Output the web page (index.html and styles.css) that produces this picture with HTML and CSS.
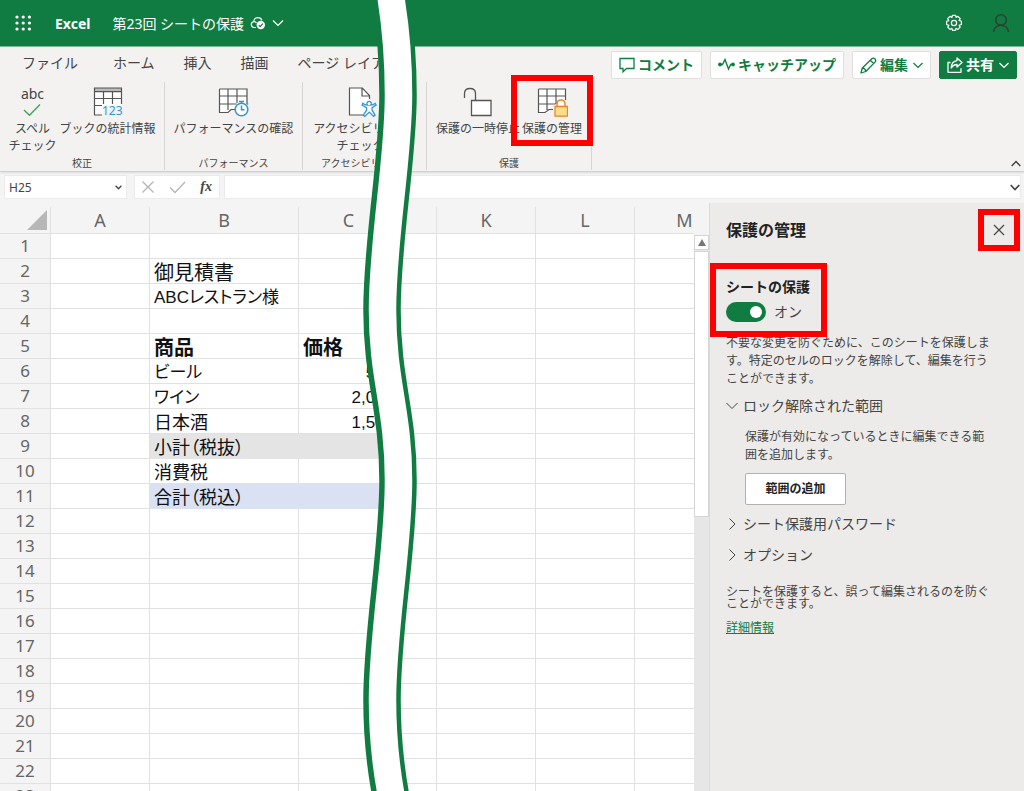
FILE: index.html
```html
<!DOCTYPE html>
<html lang="ja">
<head>
<meta charset="utf-8">
<meta name="viewport" content="width=device-width, initial-scale=1">
<title>第23回 シートの保護 - Excel</title>
<link rel="stylesheet" href="styles.css">
</head>
<body>
<div class="app">
  <header class="titlebar">
    <button class="plain launcher" aria-label="アプリ起動ツール">
      <svg width="18" height="18" viewBox="0 0 18 18" fill="#fff"><circle cx="3" cy="3" r="1.6"/><circle cx="9.200" cy="3" r="1.6"/><circle cx="15.400" cy="3" r="1.6"/><circle cx="3" cy="9" r="1.6"/><circle cx="9.200" cy="9" r="1.6"/><circle cx="15.400" cy="9" r="1.6"/><circle cx="3" cy="15" r="1.6"/><circle cx="9.200" cy="15" r="1.6"/><circle cx="15.400" cy="15" r="1.6"/></svg>
    </button>
    <span class="brand">Excel</span>
    <button class="plain doc-name">第23回 シートの保護
      <svg width="16" height="14" viewBox="0 0 16 14" fill="none" stroke="#fff" stroke-width="1.200"><path d="M6 11.500H4A3 3 0 0 1 3.600 5.600C4 3 5.600 1.600 8 1.600c2 0 3.300 1 3.900 2.600"/><path d="M3.600 5.600c1.500-.2 2.400.4 2.900 1.400"/><circle cx="10.800" cy="9" r="4.200" fill="#fff" stroke="none"/><path d="M8.800 9.200l1.400 1.400 2.700-2.900" stroke="#107c41"/></svg>
      <svg width="12" height="8" viewBox="0 0 12 8" fill="none" stroke="#fff" stroke-width="1.200"><path d="M1 1.500l5 5 5-5"/></svg>
    </button>
    <div class="account">
      <button class="plain" aria-label="設定">
        <svg width="18" height="18" viewBox="0 0 18 18" fill="none" stroke="#fff" stroke-width="1.200" stroke-linejoin="round"><path d="M7.400 1.400h3.200l.5 2 1.800-1.100 2.300 2.300-1.100 1.800 2.300.8v3.300l-2.300.7 1.100 1.900-2.300 2.300-1.900-1.100-.6 2.100H7.500l-.6-2.100L5 15.400l-2.300-2.300 1.200-1.900-2.300-.7V7.300l2.200-.7-1.100-2 2.300-2.300 1.900 1.200z"/><circle cx="9" cy="9" r="2.600"/></svg>
      </button>
      <button class="plain" aria-label="アカウント">
        <svg width="18" height="20" viewBox="0 0 18 20" fill="none" stroke="#303f35" stroke-width="1.500"><circle cx="9" cy="7" r="5.300"/><path d="M1.500 19c.5-4 3.500-6.700 7.500-6.700s7 2.700 7.500 6.700"/></svg>
      </button>
    </div>
  </header>

  <div class="ribbon">
    <div class="tab-row">
      <nav class="tabs">
        <button class="plain tab tab-file">ファイル</button>
        <button class="plain tab">ホーム</button>
        <button class="plain tab">挿入</button>
        <button class="plain tab">描画</button>
        <button class="plain tab">ページ レイアウト</button>
      </nav>
      <div class="actions">
        <button class="action"><svg width="16" height="16" viewBox="0 0 16 16" fill="none" stroke="currentColor" stroke-width="1.300"><path d="M1 1.500h14v10H7.500L4 14.800v-3.300H1z"/></svg>コメント</button>
        <button class="action"><svg width="17" height="16" viewBox="0 0 17 16" fill="none" stroke="currentColor" stroke-width="1.400"><path d="M2 7.500h2.500L7 2.500l3.500 9.500 2.200-4.500H15"/><circle cx="2" cy="7.500" r="1.200" fill="currentColor"/><circle cx="15" cy="7.500" r="1.200" fill="currentColor"/></svg>キャッチアップ</button>
        <button class="action"><svg width="17" height="17" viewBox="0 0 17 17" fill="none" stroke="currentColor" stroke-width="1.300" stroke-linejoin="round"><path d="M1 16l1.300-5L11.800 1.700c2-1.600 4.900.8 3.400 3.200L5.800 14.500zM2.300 11c1.900.2 3.300 1.600 3.500 3.500M10.300 3.200l3.400 3.400"/></svg>編集<svg class="caret" width="10" height="7" viewBox="0 0 10 7" fill="none" stroke="currentColor" stroke-width="1.200"><path d="M.5 1L5 5.500 9.500 1"/></svg></button>
        <button class="action action-share"><svg width="16" height="16" viewBox="0 0 16 16" fill="none" stroke="currentColor" stroke-width="1.300" stroke-linejoin="round"><path d="M3.500 5.500H1v9.800h13v-4"/><path d="M10 1l5 4.500-5 4.500V7.500C7.500 7.400 5.800 8.500 4.200 11 4.400 6.800 6.500 4 10 3.600z"/></svg>共有<svg class="caret" width="10" height="7" viewBox="0 0 10 7" fill="none" stroke="currentColor" stroke-width="1.200"><path d="M.5 1L5 5.500 9.500 1"/></svg></button>
      </div>
    </div>

    <div class="commands">
      <section class="group group-proof">
        <div class="group-buttons">
          <button class="plain command">
            <span class="spell"><span>abc</span><svg width="20" height="14" viewBox="0 0 20 14" fill="none" stroke="#3fa45f" stroke-width="1.400"><path d="M2 7l5.500 5.300L18 1.500"/></svg></span>
            <span>スペル<br>チェック</span>
          </button>
          <button class="plain command">
            <svg width="32" height="32" viewBox="0 0 32 32" fill="none"><path d="M2.500 3.500h27v17H11v9H2.500z" fill="#fff"/><path d="M2 3h28v3.500H2z" fill="#bbb"/><path d="M10 30H2.500V3H29.500v16M2.500 6.700h27M2.500 13.500h27M2.500 20.500H10M11.500 7v12M20.500 7v12" stroke="#555" stroke-width="1.200"/><text x="10" y="30" class="icon-number">123</text></svg>
            <span>ブックの統計情報</span>
          </button>
        </div>
        <span class="group-name">校正</span>
      </section>
      <section class="group group-performance">
        <div class="group-buttons">
          <button class="plain command">
            <svg width="32" height="32" viewBox="0 0 32 32" fill="none"><path d="M2.500 4h27v19l-15 2-3 3h-9z" fill="#fff"/><path d="M2.500 4H30v14M2.500 4v23.500H11l3-3h4M2.500 11H30M2.500 19h17M11 4v21M20 4v14" stroke="#555" stroke-width="1.200"/><circle cx="24.500" cy="24.500" r="6.300" fill="#fff" stroke="#3595d3" stroke-width="1.600"/><path d="M24.500 20.500v4.300h3M22 16.500h5M24.500 16v3M29.500 18l1.500 1.500" stroke="#3595d3" stroke-width="1.500"/></svg>
            <span>パフォーマンスの確認</span>
          </button>
        </div>
        <span class="group-name">パフォーマンス</span>
      </section>
      <section class="group group-access">
        <div class="group-buttons">
          <button class="plain command">
            <svg width="32" height="32" viewBox="0 0 32 32" fill="none"><path d="M4.500 3h13l7 7.500V16l-4 3v11.500h-16z" fill="#fff"/><path d="M20 30H4.500V3h12.800l7.200 7.500V14M17 3v8h8" stroke="#555" stroke-width="1.200"/><path d="M17.800 18.300c1.700 1.600 3.200 1.800 4.800 1.900a2.200 2.200 0 1 1 3 0c1.600-.1 3.100-.3 4.500-1.800l1 1.600-4 2.700v2.500l3 5-1.500 1.200-4.300-4.300-4.500 4.300-1.500-1.200 3.300-5v-2.500l-4.500-2.500z" fill="#fff" stroke="#3595d3" stroke-width="1.300"/></svg>
            <span>アクセシビリティ<br>チェック</span>
          </button>
        </div>
        <span class="group-name">アクセシビリティ</span>
      </section>
      <section class="group group-protect">
        <div class="group-buttons">
          <button class="plain command">
            <svg width="32" height="32" viewBox="0 0 32 32" fill="none" stroke="#555" stroke-width="1.300"><path d="M9.500 15.500h19.500v15H9.500z" fill="#fff"/><path d="M2.500 13V8.500C2.500 5 4.500 3.500 8 3.500S13.500 5 13.500 8.500v7"/></svg>
            <span>保護の一時停止</span>
          </button>
          <button class="plain command marked mark-command">
            <svg width="32" height="32" viewBox="0 0 32 32" fill="none"><path d="M2.500 4h27v16H17l-5 7.500H2.500z" fill="#fff"/><path d="M2.500 4H29.500v11M2.500 4v23.500H9l4-3h4M2.500 11h27M2.500 19h17M11 4v21M20 4v15" stroke="#555" stroke-width="1.200"/><path d="M21 22v-3c0-5.500 8-5.500 8 0v3" stroke="#e8862b" stroke-width="1.500"/><path d="M19 21.500h12.500v9.700H19z" fill="#fadd8b" stroke="#e8862b" stroke-width="1.300"/></svg>
            <span>保護の管理</span>
          </button>
        </div>
        <span class="group-name">保護</span>
      </section>
      <button class="plain collapse" aria-label="リボンを折りたたむ"><svg width="10" height="7" viewBox="0 0 10 7" fill="none" stroke="#444" stroke-width="1.500"><path d="M.7 6L5 1.500 9.300 6"/></svg></button>
    </div>
  </div>

  <div class="formula-bar">
    <div class="name-box">
      <input class="name-input" type="text" value="H25" aria-label="名前ボックス">
      <button class="plain" aria-label="名前の一覧"><svg width="7" height="5" viewBox="0 0 7 5" fill="none" stroke="#444" stroke-width="1.300"><path d="M.6.800l2.900 3 2.900-3"/></svg></button>
    </div>
    <div class="entry-buttons">
      <button class="plain" aria-label="キャンセル"><svg width="14" height="14" viewBox="0 0 14 14" fill="none" stroke="#b5b5b5" stroke-width="1.300"><path d="M1.500 1.500l11 11M12.500 1.500l-11 11"/></svg></button>
      <button class="plain" aria-label="入力"><svg width="17" height="14" viewBox="0 0 17 14" fill="none" stroke="#b5b5b5" stroke-width="1.300"><path d="M1 7.500l5 5L16 2"/></svg></button>
      <button class="plain fx" aria-label="関数の挿入">fx</button>
    </div>
    <div class="formula-box">
      <input class="formula-input" type="text" aria-label="数式バー">
      <button class="plain" aria-label="数式バーの展開"><svg width="10" height="7" viewBox="0 0 10 7" fill="none" stroke="#444" stroke-width="1.700"><path d="M.7 1L5 5.500 9.300 1"/></svg></button>
    </div>
  </div>

  <main class="workspace">
    <div class="sheet">
      <div class="cells">
        <table class="grid">
          <colgroup><col class="col-head"><col class="col-a"><col class="col-b"><col class="col-c"><col class="col-break"><col class="col-k"><col class="col-l"><col class="col-m"></colgroup>
          <thead>
            <tr><th class="corner"><svg width="20" height="20" viewBox="0 0 20 20"><path d="M20 0v20H0z" fill="#b7b7b7"/></svg></th><th>A</th><th>B</th><th>C</th><th></th><th>K</th><th>L</th><th>M</th></tr>
          </thead>
          <tbody>
            <tr><th>1</th><td></td><td></td><td></td><td></td><td></td><td></td><td></td></tr>
            <tr><th>2</th><td></td><td class="large">御見積書</td><td></td><td></td><td></td><td></td><td></td></tr>
            <tr><th>3</th><td></td><td>ABCレストラン様</td><td></td><td></td><td></td><td></td><td></td></tr>
            <tr><th>4</th><td></td><td></td><td></td><td></td><td></td><td></td><td></td></tr>
            <tr><th>5</th><td></td><td class="large strong">商品</td><td class="large strong">価格</td><td></td><td></td><td></td><td></td></tr>
            <tr><th>6</th><td></td><td>ビール</td><td class="number">500</td><td></td><td></td><td></td><td></td></tr>
            <tr><th>7</th><td></td><td>ワイン</td><td class="number">2,000</td><td></td><td></td><td></td><td></td></tr>
            <tr><th>8</th><td></td><td class="medium">日本酒</td><td class="number">1,500</td><td></td><td></td><td></td><td></td></tr>
            <tr><th>9</th><td></td><td class="medium subtotal">小計（税抜）</td><td class="subtotal"></td><td></td><td></td><td></td><td></td></tr>
            <tr><th>10</th><td></td><td class="medium">消費税</td><td></td><td></td><td></td><td></td><td></td></tr>
            <tr><th>11</th><td></td><td class="medium total">合計（税込）</td><td class="total"></td><td></td><td></td><td></td><td></td></tr>
            <tr><th>12</th><td></td><td></td><td></td><td></td><td></td><td></td><td></td></tr>
            <tr><th>13</th><td></td><td></td><td></td><td></td><td></td><td></td><td></td></tr>
            <tr><th>14</th><td></td><td></td><td></td><td></td><td></td><td></td><td></td></tr>
            <tr><th>15</th><td></td><td></td><td></td><td></td><td></td><td></td><td></td></tr>
            <tr><th>16</th><td></td><td></td><td></td><td></td><td></td><td></td><td></td></tr>
            <tr><th>17</th><td></td><td></td><td></td><td></td><td></td><td></td><td></td></tr>
            <tr><th>18</th><td></td><td></td><td></td><td></td><td></td><td></td><td></td></tr>
            <tr><th>19</th><td></td><td></td><td></td><td></td><td></td><td></td><td></td></tr>
            <tr><th>20</th><td></td><td></td><td></td><td></td><td></td><td></td><td></td></tr>
            <tr><th>21</th><td></td><td></td><td></td><td></td><td></td><td></td><td></td></tr>
            <tr><th>22</th><td></td><td></td><td></td><td></td><td></td><td></td><td></td></tr>
            <tr><th>23</th><td></td><td></td><td></td><td></td><td></td><td></td><td></td></tr>
          </tbody>
        </table>
      </div>
      <div class="scrollbar">
        <button class="plain scroll-up" aria-label="上へスクロール"><svg width="8" height="7" viewBox="0 0 8 7"><path d="M4 0l4 7H0z" fill="#777"/></svg></button>
        <div class="scroll-thumb"></div>
      </div>
    </div>

    <aside class="panel">
      <div class="panel-head">
        <h2 class="panel-title">保護の管理</h2>
        <button class="plain close marked mark-close" aria-label="閉じる"><svg width="12" height="12" viewBox="0 0 12 12" fill="none" stroke="#444" stroke-width="1.200"><path d="M1 1l10 10M11 1L1 11"/></svg></button>
      </div>
      <div class="protect marked mark-protect">
        <label class="protect-label" for="protect">シートの保護</label>
        <div class="protect-row"><input class="switch" id="protect" type="checkbox" role="switch" checked><span>オン</span></div>
      </div>
      <p class="description">不要な変更を防ぐために、このシートを保護します。特定のセルのロックを解除して、編集を行うことができます。</p>
      <button class="plain expander" aria-expanded="true"><svg width="12" height="12" viewBox="0 0 12 12" fill="none" stroke="#444"><path d="M.5 3L6 8.500 11.500 3"/></svg>ロック解除された範囲</button>
      <div class="range-body">
        <p>保護が有効になっているときに編集できる範囲を追加します。</p>
        <button class="add-range">範囲の追加</button>
      </div>
      <button class="plain expander"><svg width="12" height="12" viewBox="0 0 12 12" fill="none" stroke="#444"><path d="M3.500.500L9 6l-5.500 5.500"/></svg>シート保護用パスワード</button>
      <button class="plain expander"><svg width="12" height="12" viewBox="0 0 12 12" fill="none" stroke="#444"><path d="M3.500.500L9 6l-5.500 5.500"/></svg>オプション</button>
      <p class="hint">シートを保護すると、誤って編集されるのを防ぐことができます。</p>
      <a class="more" href="#more">詳細情報</a>
    </aside>
  </main>

  <svg class="tear" viewBox="0 0 60 791" preserveAspectRatio="none" fill="none" stroke="#107c41" aria-hidden="true">
    <path fill="#fff" stroke="none" d="M12-5C17 25 20 60 20 95C20 160 4 240 4 310C4 380 20 410 20 480C20 550 4 630 4 700C4 735 7 765 13 797H45.500C39.500 765 36.500 735 36.500 700C36.500 630 52.500 550 52.500 480C52.500 410 36.500 380 36.500 310C36.500 240 52.500 160 52.500 95C52.500 60 49.500 25 44.500-5Z"/>
    <path stroke-width="5.500" d="M12-5C17 25 20 60 20 95C20 160 4 240 4 310C4 380 20 410 20 480C20 550 4 630 4 700C4 735 7 765 13 797"/>
    <path stroke-width="4.500" d="M44.500-5C49.500 25 52.500 60 52.500 95C52.500 160 36.500 240 36.500 310C36.500 380 52.500 410 52.500 480C52.500 550 36.500 630 36.500 700C36.500 735 39.500 765 45.500 797"/>
  </svg>
</div>
</body>
</html>
```
FILE: styles.css
```css
*, *::before, *::after { box-sizing: border-box; }

body {
  margin: 0;
  font-family: "Noto Sans", "Noto Sans CJK JP", sans-serif;
  font-size: 12px;
  color: #444;
}

button, input { font: inherit; color: inherit; }
svg { display: block; flex: none; }
p, h2 { margin: 0; }

.plain {
  display: flex;
  align-items: center;
  padding: 0;
  border: 0;
  background: none;
  white-space: nowrap;
}

.app {
  position: relative;
  display: flex;
  flex-direction: column;
  height: 100vh;
  overflow: hidden;
  background: #f4f4f4;
}

/* Title bar */
.titlebar {
  display: flex;
  align-items: center;
  flex: none;
  height: 47px;
  padding: 0 14px;
  border-bottom: 1px solid #7db896;
  background: #107c41;
  color: #fff;
}
.brand { margin: 0 22px 0 23px; font-size: 14px; font-weight: 700; }
.doc-name { gap: 6px; font-size: 14px; }
.account { display: flex; align-items: center; gap: 29px; margin-left: auto; }

/* Ribbon */
.ribbon {
  flex: none;
  border-bottom: 1px solid #d2d0ce;
  background: #f3f2f1;
  box-shadow: 0 1px 2px rgba(0, 0, 0, .1);
}
.tab-row {
  display: flex;
  align-items: flex-start;
  justify-content: space-between;
  height: 33px;
  padding: 4px 7px 0 22px;
}
.tabs { display: flex; flex: none; gap: 29px; }
.tab { flex: none; height: 24px; font-size: 14px; line-height: 20px; }
.tab-file { margin-right: 6px; }
.actions { display: flex; gap: 8px; }
.action {
  display: flex;
  align-items: center;
  gap: 3px;
  height: 28px;
  padding: 0 7px;
  border: 1px solid #e1dfdd;
  border-radius: 2px;
  background: #fff;
  color: #107c41;
  font-size: 14px;
  font-weight: 700;
  line-height: 20px;
  white-space: nowrap;
}
.action .caret { margin-left: 2px; }
.action-share { border-color: #107c41; background: #107c41; color: #fff; }

.commands { display: flex; height: 91px; padding: 2px 3px 1px 0; }
.group {
  display: flex;
  flex: none;
  flex-direction: column;
  align-items: center;
  justify-content: space-between;
  border-right: 1px solid #d8d6d4;
}
.group-proof { width: 165px; }
.group-performance { width: 138px; }
.group-access { width: 124px; }
.group-protect { width: 165px; }
.group-buttons { display: flex; align-items: flex-start; }
.group-proof .group-buttons { gap: 3px; }
.group-protect .group-buttons { gap: 2px; }
.group-access .group-buttons, .group-access .group-name { margin-right: 8px; }
.command {
  flex-direction: column;
  gap: 3px;
  padding-top: 3px;
  line-height: 17px;
  text-align: center;
}
.group-name { font-size: 10px; line-height: 13px; }
.spell { display: flex; flex-direction: column; align-items: center; height: 32px; font-size: 14px; line-height: 18px; }
.icon-number { fill: #3595d3; font: 12px "Noto Sans", sans-serif; }
.collapse { align-self: flex-end; margin-left: auto; padding-bottom: 3px; }

/* Red call-out frames */
.marked { position: relative; }
.marked::after {
  content: "";
  position: absolute;
  z-index: 1;
  border: 6px solid #f00;
  pointer-events: none;
}
.mark-command::after { inset: -7px -11px -9px -11px; }
.mark-close::after { inset: -15px; }
.mark-protect::after { inset: -13px auto -15px -16px; width: 117px; }

/* Formula bar */
.formula-bar {
  display: flex;
  flex: none;
  padding: 3px 3px 4px 4px;
}
.name-box, .entry-buttons, .formula-box {
  display: flex;
  align-items: center;
  height: 24px;
  border: 1px solid #ebebeb;
  background: #fff;
}
.name-box { width: 123px; margin-right: 7px; padding: 0 4px; }
.entry-buttons { width: 86px; margin-right: 4px; padding: 0 7px 0 6px; justify-content: space-between; }
.formula-box { flex: 1; }
.name-input, .formula-input { flex: 1; min-width: 0; padding: 0; border: 0; outline: 0; background: none; }
.fx { font: italic 700 14px "Liberation Serif", serif; }

/* Sheet */
.workspace { display: flex; flex: 1; min-height: 0; }
.sheet { display: flex; flex: 1; min-width: 0; padding-top: 4px; }
.cells { flex: 1; min-width: 0; overflow: hidden; }
.grid {
  width: 735px;
  border-spacing: 0;
  table-layout: fixed;
  font-family: "Liberation Sans", "Noto Sans CJK JP", sans-serif;
}
.col-head { width: 51px; }
.col-a { width: 99px; }
.col-b { width: 149px; }
.col-c { width: 100px; }
.col-break { width: 38px; }
.col-k { width: 99px; }
.col-l { width: 99px; }
.col-m { width: 100px; }
.grid th {
  height: 25px;
  padding: 0;
  border: solid #e1e1e1;
  border-width: 0 1px 1px 0;
  background: #f4f4f4;
  color: #666;
  font: 17px/20px "Noto Sans", sans-serif;
}
.grid thead th { height: 27px; font-size: 18px; }
.corner svg { margin-left: 27px; }
.grid td {
  height: 25px;
  padding: 4px 4px 0;
  border: solid #e1e1e1;
  border-width: 0 1px 1px 0;
  background: #fff;
  color: #111;
  font-feature-settings: "palt";
  font-size: 17px;
  line-height: 20px;
  white-space: nowrap;
}
.grid .medium { font-size: 18px; }
.grid .large { font-size: 20px; }
.grid .strong { font-weight: 700; }
.grid .number { text-align: right; }
.grid .subtotal { border-color: #e5e4e4; background: #e5e4e4; }
.grid .total { border-color: #dae1f2; background: #dae1f2; }

.scrollbar { flex: none; width: 15px; margin-top: 28px; background: #e6e6e6; }
.scroll-up { justify-content: center; width: 15px; height: 15px; border: 1px solid #d5d5d5; background: #fff; }
.scroll-thumb { height: 266px; margin-top: 1px; border: 1px solid #d5d5d5; background: #fff; }

/* Protection panel */
.panel {
  display: flex;
  flex: none;
  flex-direction: column;
  align-items: flex-start;
  width: 315px;
  padding: 16px 19px 0 16px;
  border-left: 1px solid #dcdad8;
  background: #edebe9;
}
.panel-head { display: flex; align-items: center; justify-content: space-between; align-self: stretch; height: 22px; }
.panel-title { color: #222; font-size: 16px; line-height: 22px; }
.protect { margin-top: 35px; }
.protect-label { display: block; color: #222; font-size: 14px; font-weight: 700; line-height: 22px; }
.protect-row { display: flex; align-items: center; gap: 8px; margin-top: 4px; font-size: 14px; line-height: 20px; }
.switch {
  display: flex;
  appearance: none;
  width: 40px;
  height: 20px;
  margin: 0;
  padding: 4px;
  border-radius: 10px;
  background: #107c41;
}
.switch::before { content: ""; width: 12px; height: 12px; border-radius: 50%; background: #fff; }
.switch:checked { justify-content: flex-end; }
.description { margin: 12px 12px 6px 0; line-height: 18px; }
.expander { gap: 5px; height: 24px; font-size: 14px; line-height: 24px; }
.range-body { margin: 10px 12px 7px 19px; line-height: 18px; }
.add-range {
  width: 101px;
  height: 32px;
  margin-top: 9px;
  padding: 0;
  border: 1px solid #b3b0ad;
  border-radius: 2px;
  background: #fff;
  color: #222;
  font-weight: 700;
}
.expander + .expander { margin-top: 7px; }
.hint { margin: 19px 12px 9px 0; line-height: 12px; }
.more { color: #107c41; line-height: 18px; }

/* Wavy tear that joins the two halves of the window */
.tear { position: absolute; z-index: 2; top: 0; left: 362px; width: 60px; height: 100%; pointer-events: none; }
```
